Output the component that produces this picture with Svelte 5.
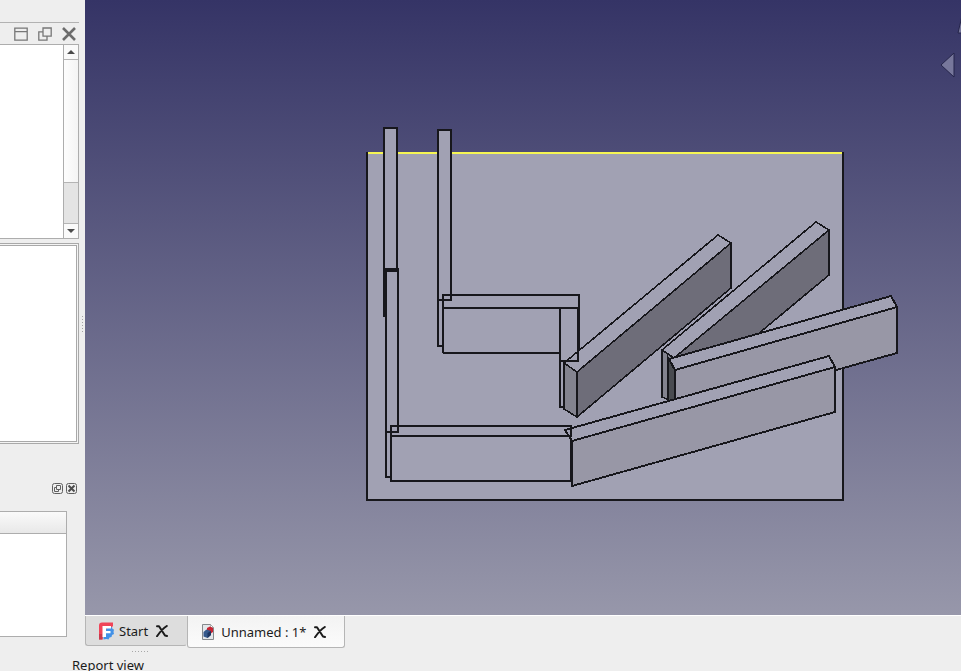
<script>
  let active = $state(1);
  const tabs = [
    { name: 'Start', icon: 'app' },
    { name: 'Unnamed : 1*', icon: 'doc' }
  ];
</script>

<div class="app">
  <div class="work">
    <aside class="side">
      <div class="toolbar"></div>
      <div class="title">
        <button aria-label="Toggle overlay">
          <svg width="14" height="14" viewBox="0 0 14 14"><path d="M.8 1.200h12.400v12H.8zM.8 4.700h12.400" /></svg>
        </button>
        <button aria-label="Float panel">
          <svg width="14" height="14" viewBox="0 0 14 14"><path d="M5 1h8.200v8.200H5zM5 4.800H.8v8.400H9V9.200" /></svg>
        </button>
        <button aria-label="Close panel">
          <svg width="14" height="14" viewBox="0 0 14 14"><path class="x" d="M1 1l12 12M13 1L1 13" /></svg>
        </button>
      </div>
      <div class="tree">
        <div class="tree-body"></div>
        <div class="scroll">
          <button aria-label="Scroll up"><svg width="8" height="4" viewBox="0 0 8 4"><path d="M0 4L4 0l4 4z" /></svg></button>
          <div class="track"><div class="thumb"></div></div>
          <button aria-label="Scroll down"><svg width="8" height="4" viewBox="0 0 8 4"><path d="M0 0h8L4 4z" /></svg></button>
        </div>
      </div>
      <div class="props"><div class="props-body"></div></div>
      <div class="mini">
        <button aria-label="Float selection view">
          <svg width="11" height="11" viewBox="0 0 11 11"><rect x=".5" y=".5" width="10" height="10" rx="2" /><path d="M4.500 2.500h4v4h-4zM4.500 4.500h-2v4h4v-2" /></svg>
        </button>
        <button aria-label="Close selection view">
          <svg width="11" height="11" viewBox="0 0 11 11"><rect x=".5" y=".5" width="10" height="10" rx="2" /><path class="mx" d="M2.500 2.500l6 6M8.500 2.500l-6 6" /></svg>
        </button>
      </div>
      <div class="selection"><div class="head"></div></div>
    </aside>
    <div class="splitter"><i></i></div>

    <main class="main">
      <div class="viewport">
        <svg class="scene" viewBox="85 0 876 615" role="img" aria-label="3D view">
          <g class="edges">
            <path class="face" stroke="none" d="M367 153H843V500H367z" />
            <path d="M367 152V500H843V152" />
            <path class="picked" d="M368 153H842" />

            <path class="face" d="M384 316V128H397V270H386z" />
            <path d="M385 269V317" stroke-width="4" />
            <path class="face" d="M386 270H398V432H386z" />
            <path d="M384 270H399" stroke-width="4" />
            <path d="M386 432V477H391" />

            <path class="face" d="M438 130H451V300H438z" />
            <path d="M438 300V346H443" />
            <path d="M443 353V295H579V352M443 308H579M443 353H560M560 307V407H564M578 308V361H560" />

            <path d="M391 482V426H571V481H391M391 436H571" />

            <g class="steep">
              <path class="face" d="M564 363L718 235L731 243L577 372z" />
              <path class="dark" d="M577 372L731 243V288L577 417z" />
              <path class="mid" d="M564 363L577 372V417L564 409z" />
              <path d="M578 352V361H564" />
              <path class="face" d="M662 350L816 222L829 230L674 358z" />
              <path class="dark" d="M674 358L829 230V275L675 403z" />
              <path class="mid" d="M662 350L674 358V402L662 397z" />
            </g>
            <path d="M577 372V416M564 363V408M731 243V288M829 230V275M662 351V397" />

            <g class="shallow">
              <path class="face" d="M669 359L891 296L897 307L675 370z" />
              <path class="side-face" d="M675 370L897 307V353L675 415z" />
              <path class="deep" d="M668 358L675 370V402H668z" />
              <path class="face" d="M565 430L829 356L835 367L572 441z" />
              <path class="side-face" d="M572 441L835 367V412L572 486z" />
            </g>
            <path d="M668 360V401M675 370V400M897 307V353M835 367V412M572 441V486M571 427V437" />
          </g>
          <path class="nav" d="M941 65l13-12v24zM965 3l-7 30h7z" />
        </svg>
      </div>
      <div class="tabs">
        {#each tabs as tab, i}
          <div class="tab" class:active={active === i}>
            <button class="label" onclick={() => (active = i)}>
              {#if tab.icon === 'app'}
                <svg width="16" height="18" viewBox="0 0 16 18">
                  <path fill="#f04458" d="M1 3.500Q1 .5 4 .5h11V4l-3 3-7 5-.5 5.500H1z" />
                  <path fill="#c93a4c" d="M1 12h3.500v5.500H1z" />
                  <path fill="#4391e6" d="M9 6l5-1 .5 2 1.500.5-.5 2.500.5 2-2 1-.5 2-2 .500-1 2-2-.5-3 .5V12z" />
                  <path fill="#fff" d="M4.500 4H13v2.500H8V9h4.500v2.200H8V15H4.500z" />
                </svg>
              {:else}
                <svg width="16" height="18" viewBox="-1 0 16 18">
                  <path fill="#e4e7ea" stroke="#85898c" d="M1.500 1.500h8l3 3v12h-11z" />
                  <path fill="#fff" stroke="#999" stroke-width=".7" d="M9.500 1.500v3h3z" />
                  <path fill="#c92332" d="M6 5l3-1.500L12 5v4l-3 2-3-2z" />
                  <path fill="#35598c" d="M2.500 9l3-2.500L10 8v4l-3.500 3-4-1.500z" />
                  <path fill="#1d3560" d="M6.500 10L10 8v4l-3.500 3z" />
                </svg>
              {/if}
              <span>{tab.name}</span>
            </button>
            <button class="close" aria-label="Close {tab.name}">
              <svg width="12" height="12" viewBox="0 0 12 12"><path d="M1 1.200L3 1.200L9 10.500L11 11M10.800 1Q6 4 1 11.200" /></svg>
            </button>
          </div>
        {/each}
      </div>
    </main>
  </div>
  <section class="report">
    <div class="grip"><i></i></div>
    <h2>Report view</h2>
  </section>
</div>

<style>
  :global(body) { margin: 0; }
  .app {
    height: 100vh;
    display: flex;
    flex-direction: column;
    overflow: hidden;
    background: #eeeeee;
    color: #1b1b1b;
    font: 13px/18px "Noto Sans", "Open Sans", sans-serif;
  }
  button {
    display: flex;
    align-items: center;
    justify-content: center;
    padding: 0;
    border: 0;
    background: none;
    color: inherit;
    font: inherit;
  }
  svg { display: block; }
  .work { flex: 1; min-height: 0; display: flex; }
  .side { width: 79px; flex: none; box-sizing: border-box; }
  .toolbar { height: 22px; border-bottom: 1px solid #b2b2b2; }
  .title { height: 21px; display: flex; align-items: center; justify-content: flex-end; gap: 10px; padding-right: 3px; }
  .title path { fill: none; stroke: #777777; stroke-width: 1.3; }
  .title .x { stroke: #6c6c6c; stroke-width: 2.6; }
  .tree {
    height: 193px;
    display: flex;
    border: solid #adadad;
    border-width: 1px 1px 1px 0;
    background: #fff;
  }
  .tree-body { flex: 1; }
  .scroll { width: 14px; display: flex; flex-direction: column; border-left: 1px solid #adadad; background: #e4e4e4; }
  .scroll button { height: 14px; background: #fafafa; }
  .scroll path { fill: #4b4b4b; }
  .track { flex: 1; border: solid #b4b4b4; border-width: 1px 0; }
  .thumb { height: 75%; border-bottom: 1px solid #b4b4b4; background: linear-gradient(90deg, #fdfdfd, #f4f4f4); }
  .props {
    height: 199px;
    margin-top: 4px;
    border: solid #a9a9a9;
    border-width: 1px 1px 1px 0;
    background: #f4f4f4;
  }
  .props-body { height: 195px; margin: 1px 1px 0 0; border: solid #a9a9a9; border-width: 1px 1px 1px 0; background: #fff; }
  .mini { display: flex; justify-content: flex-end; gap: 3px; padding: 39px 2px 17px 0; }
  .mini rect, .mini path { fill: none; stroke: #606060; }
  .mini .mx { stroke: #4d4d4d; stroke-width: 2; }
  .selection { height: 124px; margin-right: 12px; border: solid #adadad; border-width: 1px 1px 1px 0; background: #fff; }
  .head { height: 21px; border-bottom: 1px solid #adadad; background: linear-gradient(#fafafa, #e8e8e8); }
  .splitter { width: 6px; flex: none; display: flex; align-items: center; justify-content: center; }
  .splitter i { width: 1px; height: 17px; background: repeating-linear-gradient(#a4a4a4 0 1px, transparent 1px 3px); }

  .main { flex: 1; min-width: 0; display: flex; flex-direction: column; }
  .viewport { flex: 1; min-height: 0; background: linear-gradient(#353466, #9797aa); }
  .scene { width: 100%; height: 100%; }
  .edges { shape-rendering: crispEdges; fill: none; stroke: #17171c; stroke-width: 2; }
  .steep { stroke-width: 1.6; }
  .shallow { stroke-width: 1.9; }
  .face { fill: #a1a1b3; }
  .dark { fill: #6e6d79; }
  .mid { fill: #83838f; }
  .side-face { fill: #9897a6; }
  .deep { fill: #494b50; }
  .picked { stroke: #f6f653; }
  .nav { fill: #77779b; stroke: #25254a; stroke-width: 1; }

  .tabs { height: 32px; display: flex; align-items: flex-start; border-top: 1px solid #fff; }
  .tab {
    height: 29px;
    display: flex;
    align-items: center;
    gap: 8px;
    padding: 0 18px 0 12px;
    border: 1px solid #b5b5b5;
    border-top: 0;
    border-radius: 0 0 3px 3px;
    background: #dddddd;
  }
  .tab:first-child { border-right-color: #dddddd; }
  .tab.active { height: 31px; background: linear-gradient(#f3f3f3, #fbfbfb); }
  .label { gap: 5px; }
  .close path { fill: none; stroke: #1b1b1b; stroke-width: 2; stroke-linecap: round; stroke-linejoin: round; }

  .report { height: 23px; flex: none; }
  .grip { height: 7px; display: flex; align-items: center; padding-left: 132px; }
  .grip i { width: 17px; height: 1px; background: repeating-linear-gradient(90deg, #a8a8a8 0 1px, transparent 1px 3px); }
  h2 { margin: 0; padding-left: 72px; font-size: 13px; line-height: 20px; font-weight: 400; }
</style>
